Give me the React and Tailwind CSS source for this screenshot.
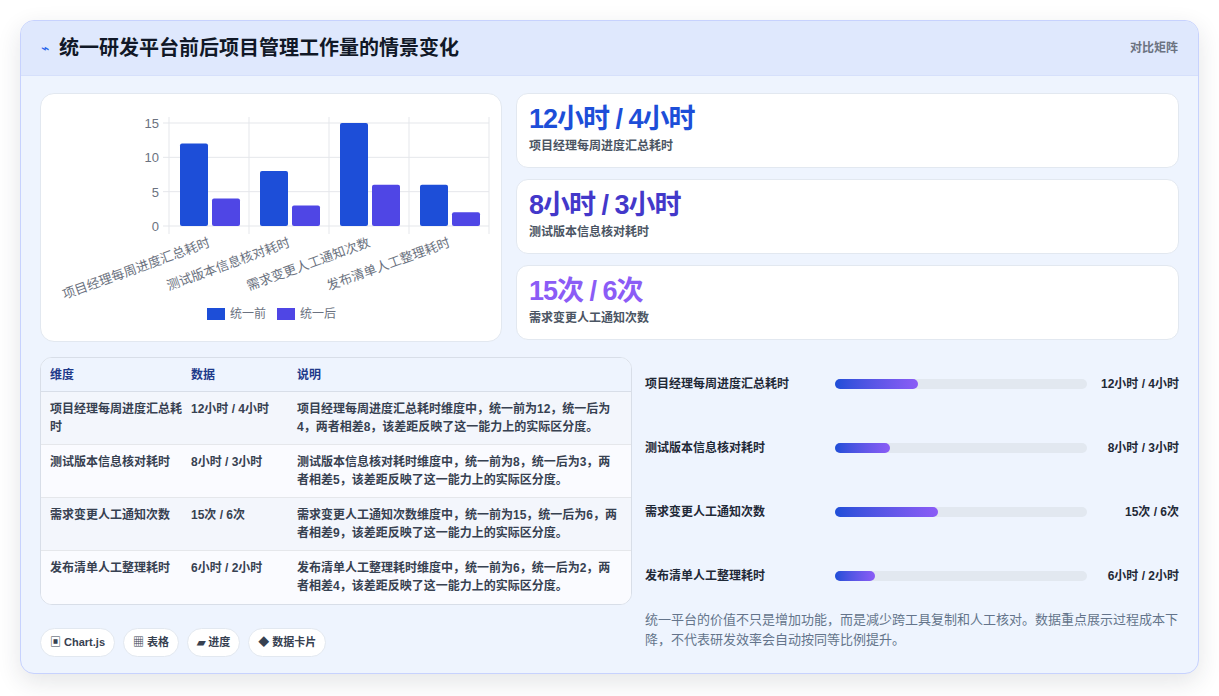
const F = { fontFamily: '"Liberation Sans","Noto Sans CJK SC",sans-serif' };
const cats = ['项目经理每周进度汇总耗时','测试版本信息核对耗时','需求变更人工通知次数','发布清单人工整理耗时'];
const before=[12,8,15,6], after=[4,3,6,2];
const vals=['12小时 / 4小时','8小时 / 3小时','15次 / 6次','6小时 / 2小时'];
const notes=['项目经理每周进度汇总耗时维度中，统一前为12，统一后为4，两者相差8，该差距反映了这一能力上的实际区分度。','测试版本信息核对耗时维度中，统一前为8，统一后为3，两者相差5，该差距反映了这一能力上的实际区分度。','需求变更人工通知次数维度中，统一前为15，统一后为6，两者相差9，该差距反映了这一能力上的实际区分度。','发布清单人工整理耗时维度中，统一前为6，统一后为2，两者相差4，该差距反映了这一能力上的实际区分度。'];
const pct=[33,22,41,16];

function Chart(){
  const x0=128,x1=448,y0=132,yt=29; const h=(v)=>(v/15)*(y0-yt);
  return (
    <svg width="461" height="248" viewBox="0 0 461 248" style={F}>
      {[0,5,10,15].map(v=>{const y=y0-h(v);return <g key={v}><line x1={x0-6} x2={x1} y1={y} y2={y} stroke="#e5e7eb"/><text x={x0-10} y={y+5} textAnchor="end" fontSize="13" fill="#6b7280">{v}</text></g>})}
      {[0,1,2,3,4].map(i=><line key={i} x1={x0+i*80} x2={x0+i*80} y1={yt-6} y2={y0+8} stroke="#e5e7eb"/>)}
      {cats.map((c,i)=>{const cx=x0+i*80;return <g key={i}>
        <rect x={cx+11} y={y0-h(before[i])} width="28" height={h(before[i])} rx="2" fill="#1d4ed8"/>
        <rect x={cx+43} y={y0-h(after[i])} width="28" height={h(after[i])} rx="2" fill="#4f46e5"/>
        <text transform={`translate(${cx+42},${y0+20}) rotate(-20)`} textAnchor="end" fontSize="13" fill="#6b7280">{c}</text>
      </g>})}
      <rect x="166" y="214" width="18" height="12" fill="#1d4ed8"/><text x="189" y="224" fontSize="12" fill="#6b7280">统一前</text>
      <rect x="236" y="214" width="18" height="12" fill="#4f46e5"/><text x="259" y="224" fontSize="12" fill="#6b7280">统一后</text>
    </svg>
  );
}

export default function App(){
  return (
    <div style={F} className="w-[1219px] h-[696px] bg-white px-[20px] pt-[20px]">
      <div className="h-[654px] rounded-[14px] border border-[#c7d2fe] bg-[#eef4fe] overflow-hidden shadow-[0_8px_24px_rgba(30,41,59,0.12)]">
        <div className="h-[55px] bg-[#dfe8fd] flex items-center justify-between px-[20px] border-b border-[#d6e0fb]">
          <div className="flex items-center gap-[10px]">
            <span className="text-[#2563eb] text-[14px]">⌁</span>
            <span className="text-[20px] font-bold text-[#111827]">统一研发平台前后项目管理工作量的情景变化</span>
          </div>
          <span className="text-[12px] font-bold text-[#6b7280]">对比矩阵</span>
        </div>
        <div className="p-[19px] pt-[17px]">
          <div className="flex gap-[14px]">
            <div className="w-[462px] h-[249px] bg-white rounded-[14px] border border-[#e2e8f0]"><Chart/></div>
            <div className="flex-1 flex flex-col gap-[11px]">
              {[['12小时 / 4小时','项目经理每周进度汇总耗时','text-[#1d4ed8]'],['8小时 / 3小时','测试版本信息核对耗时','text-[#4338ca]'],['15次 / 6次','需求变更人工通知次数','text-[#8b5cf6]']].map(([v,l,c])=>(
                <div key={l} className="h-[75px] bg-white rounded-[12px] border border-[#e2e8f0] px-[12px] pt-[8px]">
                  <div className={`text-[27px] font-bold leading-[34px] tracking-[-1px] ${c}`}>{v}</div>
                  <div className="text-[12px] font-bold text-[#4b5563] mt-[1px]">{l}</div>
                </div>
              ))}
            </div>
          </div>
          <div className="flex gap-[13px] mt-[15px]">
            <div className="w-[592px]">
              <div className="rounded-[12px] border border-[#d8dee8] overflow-hidden bg-white text-[12px]">
                <div className="grid grid-cols-[150px_106px_1fr] h-[34px] items-center bg-[#eef4fe] border-b border-[#d8dee8] font-bold text-[#1e3a8a]">
                  <div className="pl-[9px]">维度</div><div>数据</div><div>说明</div>
                </div>
                {cats.map((c,i)=>(
                  <div key={c} className={`grid grid-cols-[150px_106px_1fr] h-[53px] pt-[8px] leading-[18px] font-bold text-[#374151] ${i<3?'border-b border-[#e5e7eb]':''} ${i%2===0?'bg-[#f3f6fc]':'bg-[#fafbff]'}`}>
                    <div className="pl-[9px] pr-[8px]">{c}</div><div>{vals[i]}</div><div className="pr-[10px]">{notes[i]}</div>
                  </div>
                ))}
              </div>
              <div className="flex gap-[8px] mt-[23px]">
                {['▣ Chart.js','▦ 表格','▰ 进度','◆ 数据卡片'].map(t=>(
                  <span key={t} className="h-[29px] px-[9px] flex items-center rounded-full bg-white border border-[#e2e8f0] text-[11px] font-bold text-[#374151]">{t}</span>
                ))}
              </div>
            </div>
            <div className="flex-1 -mt-[5px]">
              {cats.map((c,i)=>(
                <div key={c} className="h-[64px] flex items-center gap-[8px] text-[12px] font-bold text-[#1f2937]">
                  <span className="w-[182px] shrink-0">{c}</span>
                  <div className="flex-1 h-[10px] rounded-full bg-[#e2e8f0]"><div className="h-full rounded-full bg-gradient-to-r from-[#1d4ed8] to-[#8b5cf6]" style={{width:pct[i]+'%'}}/></div>
                  <span className="w-[84px] text-right shrink-0 whitespace-nowrap">{vals[i]}</span>
                </div>
              ))}
              <p className="mt-[2px] text-[13px] leading-[20px] text-[#64748b]">统一平台的价值不只是增加功能，而是减少跨工具复制和人工核对。数据重点展示过程成本下降，不代表研发效率会自动按同等比例提升。</p>
            </div>
          </div>
        </div>
      </div>
    </div>
  );
}
